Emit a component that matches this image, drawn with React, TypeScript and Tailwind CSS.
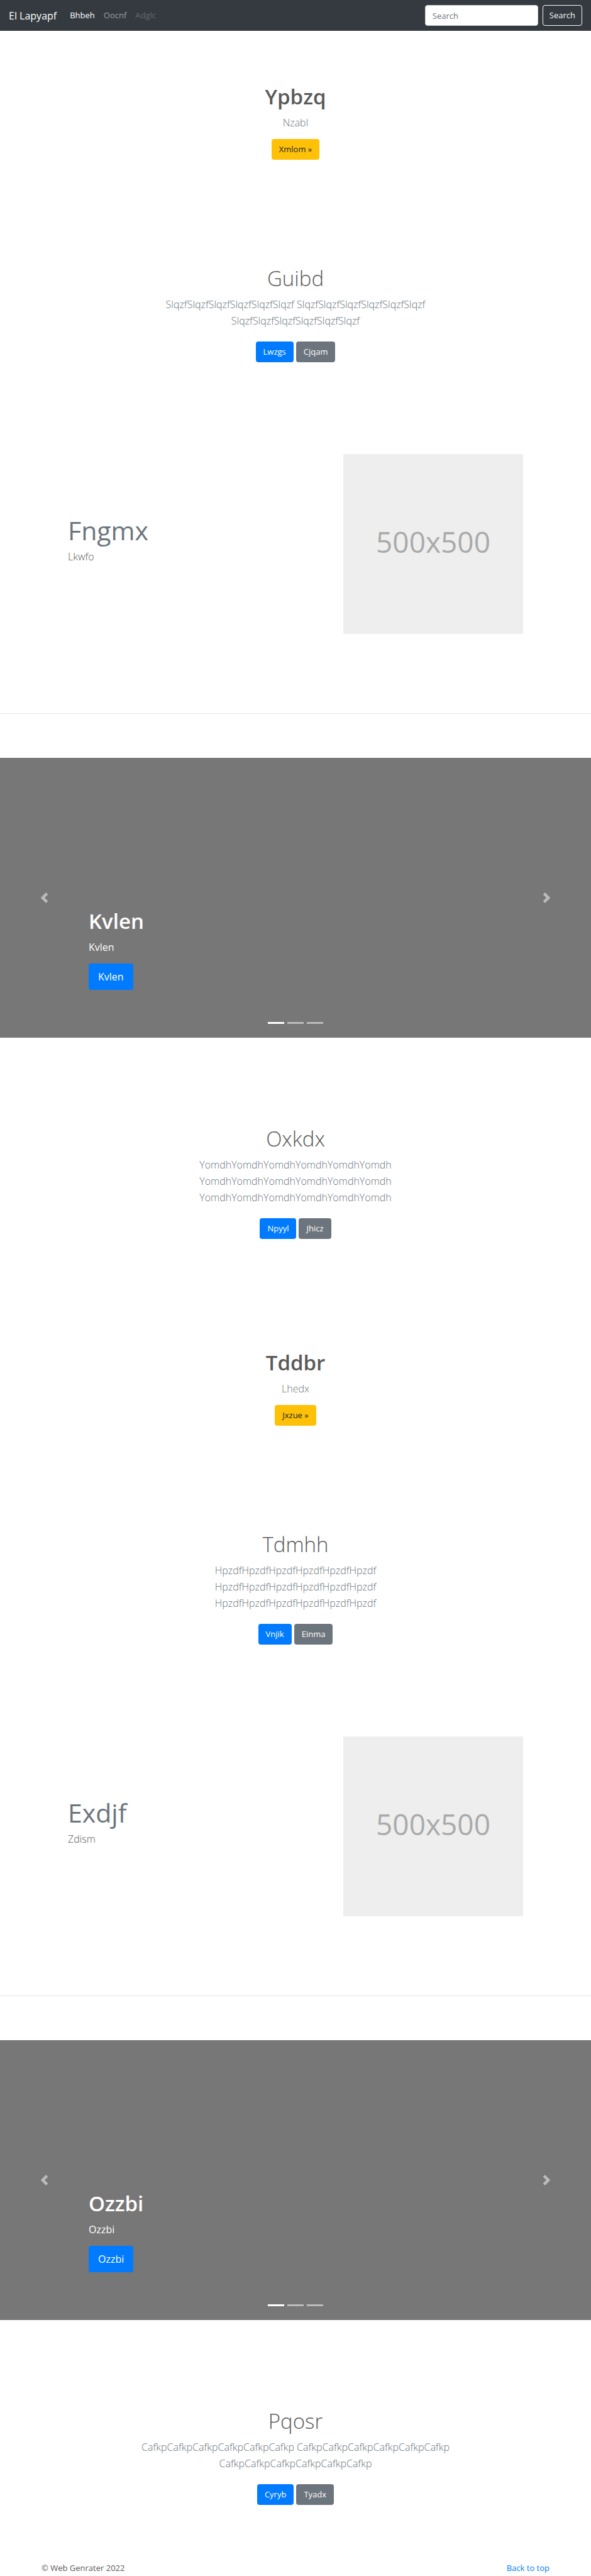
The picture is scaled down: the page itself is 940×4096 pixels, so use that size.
import type { ReactNode } from "react";

const buttonTones = {
  primary: "bg-[#007bff] text-white",
  secondary: "bg-[#6c757d] text-white",
  warning: "bg-[#ffc107] text-[#212529]",
};

function Button({ tone, children }: { tone: keyof typeof buttonTones; children: ReactNode }) {
  return (
    <button type="button" className={`h-[33px] rounded-[4px] px-3 text-[13px] leading-[21px] ${buttonTones[tone]}`}>
      {children}
    </button>
  );
}

function Navbar() {
  return (
    <nav className="flex h-[49px] items-center justify-between bg-[#343a40] px-[14px]">
      <div className="flex items-center">
        <a href="#" className="mr-[14px] text-[16px] leading-[26px] text-white">El Lapyapf</a>
        <ul className="flex text-[13px] leading-[21px]">
          <li><a href="#" className="px-[7px] text-white">Bhbeh</a></li>
          <li><a href="#" className="px-[7px] text-white/50">Oocnf</a></li>
          <li><a href="#" aria-disabled="true" className="px-[7px] text-white/25">Adglc</a></li>
        </ul>
      </div>
      <form className="flex gap-[7px]" onSubmit={(e) => e.preventDefault()}>
        <input
          type="search"
          aria-label="Search"
          placeholder="Search"
          className="h-[33px] w-[180px] rounded-[4px] border border-[#ced4da] bg-white px-[11px] text-[13px] text-[#495057] placeholder:text-[#6c757d]"
        />
        <button type="submit" className="h-[33px] rounded-[4px] border border-[#f8f9fa] px-[10px] text-[13px] leading-[21px] text-[#f8f9fa]">
          Search
        </button>
      </form>
    </nav>
  );
}

function Cover({ title, text, action }: { title: string; text: string; action: string }) {
  return (
    <section className="flex flex-col items-center text-center">
      <h1 className="mb-[6px] text-[33px] font-semibold leading-[44px]">{title}</h1>
      <p className="mb-[13px] text-[16px] font-light leading-[26px] text-[#6c757d]">{text}</p>
      <Button tone="warning">{action} »</Button>
    </section>
  );
}

function Jumbotron({ title, word, primary, secondary }: { title: string; word: string; primary: string; secondary: string }) {
  const chunk = word.repeat(6);
  return (
    <section className="mx-auto flex max-w-[508px] flex-col items-center text-center">
      <h1 className="mb-[6px] text-[33px] font-light leading-[44px]">{title}</h1>
      <p className="mb-[20px] text-[16px] font-light leading-[26px] text-[#6c757d]">
        {chunk} {chunk} {chunk}
      </p>
      <div className="flex gap-1">
        <Button tone="primary">{primary}</Button>
        <Button tone="secondary">{secondary}</Button>
      </div>
    </section>
  );
}

function Featurette({ title, text }: { title: string; text: string }) {
  return (
    <section className="mx-auto flex max-w-[724px] items-center justify-between">
      <div>
        <h2 className="mb-[6px] text-[41px] leading-[46px] text-[#6c757d]">{title}</h2>
        <p className="mb-[13px] text-[16px] font-light leading-[26px]">{text}</p>
      </div>
      <div className="flex size-[286px] items-center justify-center bg-[#eeeeee] pb-2 text-[46px] text-[#aaaaaa]">500x500</div>
    </section>
  );
}

function Arrow({ next }: { next?: boolean }) {
  return (
    <button
      type="button"
      aria-label={next ? "Next" : "Previous"}
      className={`absolute inset-y-0 flex w-[15%] items-center justify-center opacity-50 ${next ? "right-0" : "left-0"}`}
    >
      <svg viewBox="0 0 8 8" className="size-[17px] fill-white">
        <path d={next ? "M2.75 0l-1.5 1.5L3.75 4l-2.5 2.5L2.75 8l4-4-4-4z" : "M5.25 0l-4 4 4 4 1.5-1.5L4.25 4l2.5-2.5L5.25 0z"} />
      </svg>
    </button>
  );
}

function Carousel({ label }: { label: string }) {
  return (
    <section className="relative flex h-[445px] flex-col items-start justify-end bg-[#777777] px-[15%] pb-[76px] text-white">
      <h1 className="mb-[6px] text-[33px] font-semibold leading-[44px]">{label}</h1>
      <p className="mb-[13px] text-[16px] leading-[26px]">{label}</p>
      <button type="button" className="h-[42px] rounded-[4px] bg-[#007bff] px-[15px] text-[16px] leading-[26px]">{label}</button>
      <Arrow />
      <Arrow next />
      <div className="absolute inset-x-0 bottom-[22px] flex justify-center gap-[5px]">
        <button type="button" aria-label="Slide 1" className="h-[3px] w-[26px] bg-white" />
        <button type="button" aria-label="Slide 2" className="h-[3px] w-[26px] bg-white/50" />
        <button type="button" aria-label="Slide 3" className="h-[3px] w-[26px] bg-white/50" />
      </div>
    </section>
  );
}

function Divider() {
  return <hr className="mt-[126px] mb-[70px] border-t border-black/10" />;
}

export default function App() {
  return (
    <div className="min-h-screen bg-white font-['Open_Sans',sans-serif] text-[#5a5a5a]">
      <Navbar />
      <main>
        <div className="pt-[83px] pb-[167px]">
          <Cover title="Ypbzq" text="Nzabl" action="Xmlom" />
        </div>
        <Jumbotron title="Guibd" word="Slqzf" primary="Lwzgs" secondary="Cjqam" />
        <div className="pt-[146px]">
          <Featurette title="Fngmx" text="Lkwfo" />
        </div>
        <Divider />
        <Carousel label="Kvlen" />
        <div className="pt-[139px]">
          <Jumbotron title="Oxkdx" word="Yomdh" primary="Npyyl" secondary="Jhicz" />
        </div>
        <div className="pt-[175px] pb-[167px]">
          <Cover title="Tddbr" text="Lhedx" action="Jxzue" />
        </div>
        <Jumbotron title="Tdmhh" word="Hpzdf" primary="Vnjik" secondary="Einma" />
        <div className="pt-[146px]">
          <Featurette title="Exdjf" text="Zdism" />
        </div>
        <Divider />
        <Carousel label="Ozzbi" />
        <div className="pt-[139px]">
          <Jumbotron title="Pqosr" word="Cafkp" primary="Cyryb" secondary="Tyadx" />
        </div>
      </main>
      <footer className="flex justify-between px-[66px] pt-[90px] text-[13px] leading-[21px]">
        <p>© Web Genrater 2022</p>
        <a href="#" className="text-[#007bff]">Back to top</a>
      </footer>
    </div>
  );
}
